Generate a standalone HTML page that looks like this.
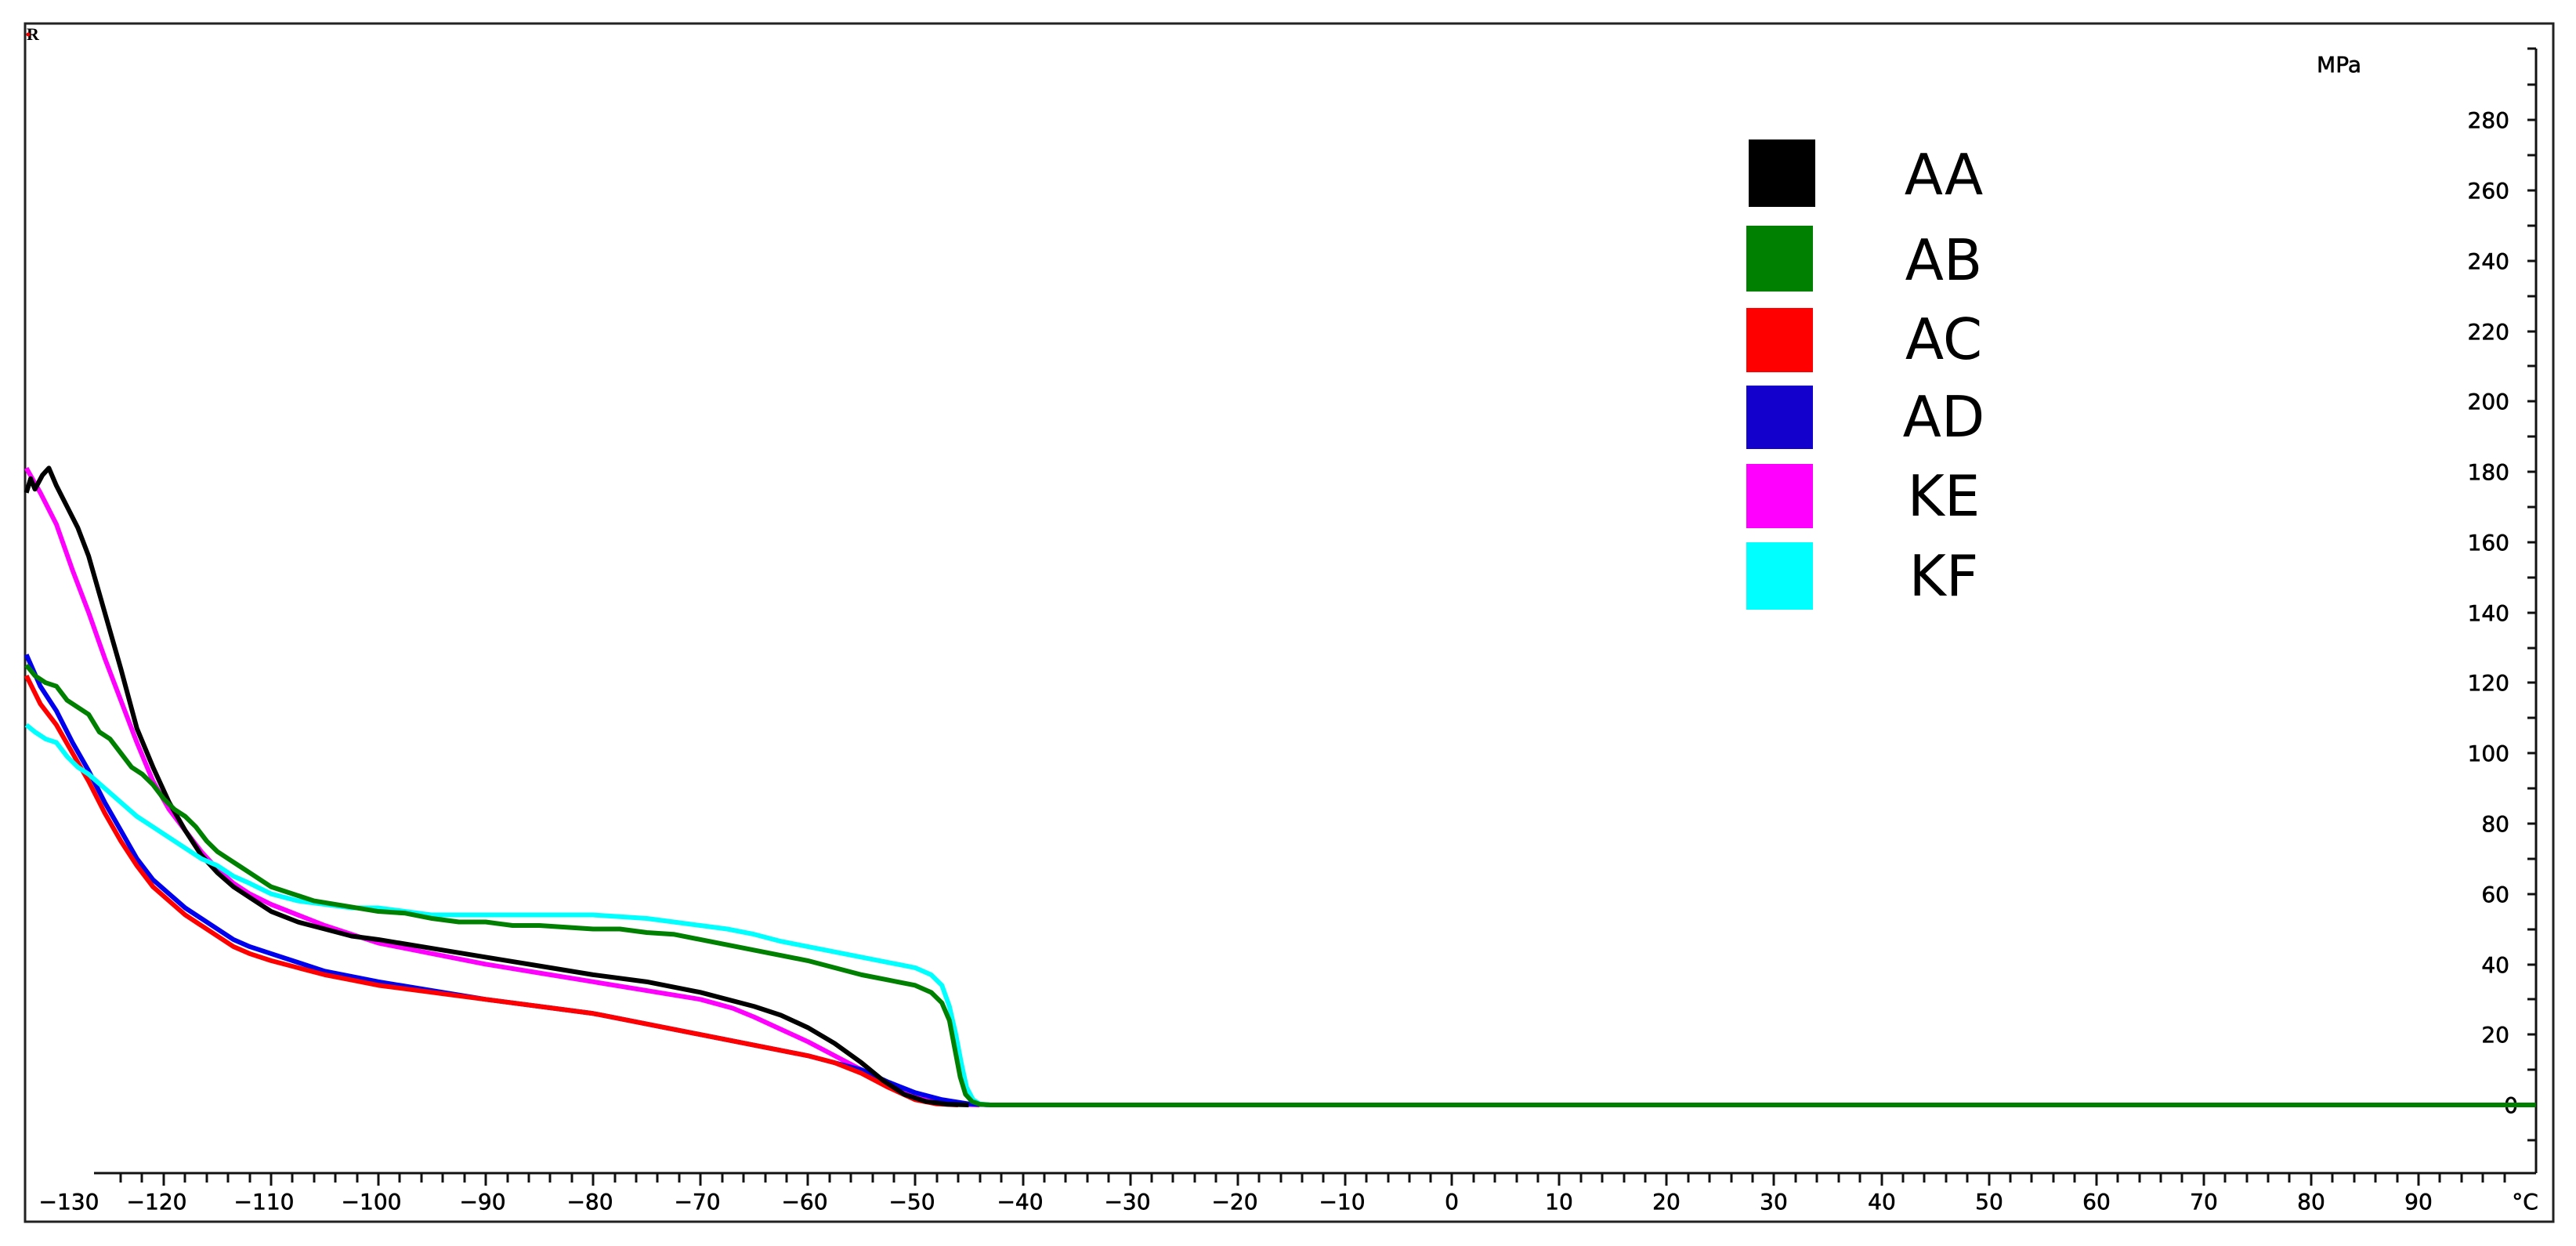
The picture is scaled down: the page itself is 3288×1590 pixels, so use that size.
<!DOCTYPE html>
<html><head><meta charset="utf-8"><style>
html,body{margin:0;padding:0;background:#fff;}
svg{display:block;}
text{font-family:"DejaVu Sans","Liberation Sans",sans-serif;fill:#000;}
.ax text{stroke:#000;stroke-width:0.6;}
</style></head><body>
<svg width="3288" height="1590" viewBox="0 0 3288 1590" xmlns="http://www.w3.org/2000/svg">
<rect x="0" y="0" width="3288" height="1590" fill="#fff"/>
<rect x="32" y="30" width="3227" height="1529" fill="none" stroke="#222" stroke-width="3"/>
<text x="34" y="51" font-size="22" font-weight="bold" style="font-family:'Liberation Serif',serif">R</text>
<circle cx="36" cy="44" r="2.5" fill="#e00"/>

<g stroke="#111" stroke-width="3" fill="none">
<line x1="3237" y1="62" x2="3237" y2="1497"/>
<line x1="3226" y1="62" x2="3237" y2="62"/>
<path d="M3226 108H3237M3226 153H3237M3226 198H3237M3226 243H3237M3226 288H3237M3226 333H3237M3226 378H3237M3226 423H3237M3226 467H3237M3226 512H3237M3226 557H3237M3226 602H3237M3226 647H3237M3226 692H3237M3226 737H3237M3226 782H3237M3226 827H3237M3226 871H3237M3226 916H3237M3226 961H3237M3226 1006H3237M3226 1051H3237M3226 1096H3237M3226 1141H3237M3226 1186H3237M3226 1231H3237M3226 1275H3237M3226 1320H3237M3226 1365H3237M3226 1410H3237M3226 1455H3237"/>
</g>
<g class="ax" font-size="28" text-anchor="end">
<text x="3014" y="92">MPa</text>
<text x="3203" y="163">280</text>
<text x="3203" y="253">260</text>
<text x="3203" y="343">240</text>
<text x="3203" y="433">220</text>
<text x="3203" y="522">200</text>
<text x="3203" y="612">180</text>
<text x="3203" y="702">160</text>
<text x="3203" y="792">140</text>
<text x="3203" y="881">120</text>
<text x="3203" y="971">100</text>
<text x="3203" y="1061">80</text>
<text x="3203" y="1151">60</text>
<text x="3203" y="1241">40</text>
<text x="3203" y="1330">20</text>
<text x="3214" y="1420">0</text>
</g>

<line x1="120" y1="1497" x2="3237" y2="1497" stroke="#111" stroke-width="3"/>
<path stroke="#111" stroke-width="3" fill="none" d="
M154 1497V1509M181 1497V1509M209 1497V1509M236 1497V1509M264 1497V1509M291 1497V1509M319 1497V1509M346 1497V1509M373 1497V1509M401 1497V1509M428 1497V1509M456 1497V1509M483 1497V1509M510 1497V1509M538 1497V1509M565 1497V1509M593 1497V1509M620 1497V1509M648 1497V1509M675 1497V1509M702 1497V1509M730 1497V1509M757 1497V1509M785 1497V1509M812 1497V1509M839 1497V1509M867 1497V1509M894 1497V1509M922 1497V1509M949 1497V1509M977 1497V1509M1004 1497V1509M1031 1497V1509M1059 1497V1509M1086 1497V1509M1114 1497V1509M1141 1497V1509M1168 1497V1509M1196 1497V1509M1223 1497V1509M1251 1497V1509M1278 1497V1509M1306 1497V1509M1333 1497V1509M1360 1497V1509M1388 1497V1509M1415 1497V1509M1443 1497V1509M1470 1497V1509M1497 1497V1509M1525 1497V1509M1552 1497V1509M1580 1497V1509M1607 1497V1509M1635 1497V1509M1662 1497V1509M1689 1497V1509M1717 1497V1509M1744 1497V1509M1772 1497V1509M1799 1497V1509M1826 1497V1509M1853 1497V1509M1881 1497V1509M1908 1497V1509M1936 1497V1509M1963 1497V1509M1990 1497V1509M2018 1497V1509M2045 1497V1509M2073 1497V1509M2100 1497V1509M2127 1497V1509M2155 1497V1509M2182 1497V1509M2210 1497V1509M2237 1497V1509M2264 1497V1509M2292 1497V1509M2319 1497V1509M2347 1497V1509M2374 1497V1509M2402 1497V1509M2429 1497V1509M2456 1497V1509M2484 1497V1509M2511 1497V1509M2539 1497V1509M2566 1497V1509M2593 1497V1509M2621 1497V1509M2648 1497V1509M2676 1497V1509M2703 1497V1509M2731 1497V1509M2758 1497V1509M2785 1497V1509M2813 1497V1509M2840 1497V1509M2868 1497V1509M2895 1497V1509M2922 1497V1509M2950 1497V1509M2977 1497V1509M3005 1497V1509M3032 1497V1509M3060 1497V1509M3087 1497V1509M3114 1497V1509M3142 1497V1509M3169 1497V1509M3197 1497V1509
M209 1497V1513M346 1497V1513M483 1497V1513M620 1497V1513M757 1497V1513M894 1497V1513M1031 1497V1513M1168 1497V1513M1306 1497V1513M1443 1497V1513M1580 1497V1513M1717 1497V1513M1853 1497V1513M1990 1497V1513M2127 1497V1513M2264 1497V1513M2402 1497V1513M2539 1497V1513M2676 1497V1513M2813 1497V1513M2950 1497V1513M3087 1497V1513"/>
<g class="ax" font-size="28" text-anchor="middle">
<text x="88" y="1543">−130</text>
<text x="200" y="1543">−120</text>
<text x="337" y="1543">−110</text>
<text x="474" y="1543">−100</text>
<text x="616" y="1543">−90</text>
<text x="753" y="1543">−80</text>
<text x="890" y="1543">−70</text>
<text x="1027" y="1543">−60</text>
<text x="1164" y="1543">−50</text>
<text x="1302" y="1543">−40</text>
<text x="1439" y="1543">−30</text>
<text x="1576" y="1543">−20</text>
<text x="1713" y="1543">−10</text>
<text x="1853" y="1543">0</text>
<text x="1990" y="1543">10</text>
<text x="2127" y="1543">20</text>
<text x="2264" y="1543">30</text>
<text x="2402" y="1543">40</text>
<text x="2539" y="1543">50</text>
<text x="2676" y="1543">60</text>
<text x="2813" y="1543">70</text>
<text x="2950" y="1543">80</text>
<text x="3087" y="1543">90</text>
<text x="3223" y="1543">°C</text>
</g>

<g transform="translate(1853,1410) scale(13.7,-4.49)" fill="none" stroke-width="6" stroke-linejoin="round">
<polyline vector-effect="non-scaling-stroke" stroke="#ff00ff" points="-132.8,181 -131.5,174 -130,165 -128.5,152 -127,140 -125.5,127 -124,115 -122.5,103 -121,92 -119.5,84 -118,78 -116.5,72 -115,67 -113.5,63 -112,60 -110,57 -107.5,54 -105,51 -102.5,48.5 -100,46 -95,43 -90,40 -85,37.5 -80,35 -75,32.5 -70,30 -67,27.5 -65,25 -62.5,21.5 -60,18 -57.5,14 -55,10 -52.5,6 -50,3 -48,1 -46,0.2 -44,0"/>
<polyline vector-effect="non-scaling-stroke" stroke="#0000ee" points="-132.8,128 -131.5,119 -130,112 -128.5,103 -127,95 -125.5,86 -124,78 -122.5,70 -121,64 -119.5,60 -118,56 -116.5,53 -115,50 -113.5,47 -112,45 -110,43 -107.5,40.5 -105,38 -102.5,36.5 -100,35 -95,32.5 -90,30 -85,28 -80,26 -75,23 -70,20 -65,17 -60,14 -57.5,12 -55,10 -52.5,6.5 -50,3.5 -47.5,1.5 -45,0.3 -43,0"/>
<polyline vector-effect="non-scaling-stroke" stroke="#ff0000" points="-132.8,122 -131.5,114 -130,108 -128.5,100 -127,92 -125.5,83 -124,75 -122.5,68 -121,62 -119.5,58 -118,54 -116.5,51 -115,48 -113.5,45 -112,43 -110,41 -107.5,39 -105,37 -102.5,35.5 -100,34 -95,32 -90,30 -85,28 -80,26 -75,23 -70,20 -65,17 -60,14 -57.5,12 -55,9 -52.5,5 -50,1.5 -48,0.3 -46,0"/>
<polyline vector-effect="non-scaling-stroke" stroke="#000000" points="-132.8,174 -132.4,178 -132,175 -131.3,179 -130.7,181 -130,176 -129,170 -128,164 -127,156 -125.5,140 -124,124 -122.5,107 -121,96 -119.5,86 -118,78 -116.5,71 -115,66 -113.5,62 -112,59 -110,55 -107.5,52 -105,50 -102.5,48 -100,47 -95,44.5 -90,42 -85,39.5 -80,37 -75,35 -70,32 -67.5,30 -65,28 -62.5,25.5 -60,22 -57.5,17.5 -55,12 -53,7 -51,3 -49,1 -47,0.2 -45,0"/>
<polyline vector-effect="non-scaling-stroke" stroke="#00ffff" points="-132.8,108 -132,106 -131,104 -130,103 -129,99 -128,96 -127,94 -125.5,90 -124,86 -122.5,82 -121,79 -119.5,76 -118,73 -116.5,70 -115,68 -113.5,65 -112,63 -110,60 -107.5,58 -105,57 -102.5,56 -100,56 -97.5,55 -95,54 -90,54 -85,54 -80,54 -77.5,53.5 -75,53 -72.5,52 -70,51 -67.5,50 -65,48.5 -62.5,46.5 -60,45 -57.5,43.5 -55,42 -52.5,40.5 -50,39 -48.5,37 -47.5,34 -46.8,28 -46.2,20 -45.7,12 -45.2,5 -44.6,1.5 -44,0.3 -43,0"/>
<polyline vector-effect="non-scaling-stroke" stroke="#008000" points="-132.8,125 -132,122 -131,120 -130,119 -129,115 -128,113 -127,111 -126,106 -125,104 -124,100 -123,96 -122,94 -121,91 -120,87 -119,84 -118,82 -117,79 -116,75 -115,72 -114,70 -113,68 -112,66 -111,64 -110,62 -108,60 -106,58 -104,57 -102,56 -100,55 -97.5,54.5 -95,53 -92.5,52 -90,52 -87.5,51 -85,51 -82.5,50.5 -80,50 -77.5,50 -75,49 -72.5,48.5 -70,47 -67.5,45.5 -65,44 -62.5,42.5 -60,41 -57.5,39 -55,37 -52.5,35.5 -50,34 -48.5,32 -47.5,29 -46.8,24 -46.3,16 -45.8,8 -45.3,3 -44.7,1 -44,0.2 -43,0 101,0"/>
</g>

<rect x="2232" y="178" width="85" height="86" fill="#000"/>
<rect x="2229" y="288" width="85" height="84" fill="#008000"/>
<rect x="2229" y="393" width="85" height="82" fill="#ff0000"/>
<rect x="2229" y="492" width="85" height="81" fill="#1400cc"/>
<rect x="2229" y="592" width="85" height="82" fill="#ff00ff"/>
<rect x="2229" y="692" width="85" height="86" fill="#00ffff"/>
<g font-size="72" text-anchor="middle">
<text x="2481" y="248">AA</text>
<text x="2481" y="357">AB</text>
<text x="2481" y="458">AC</text>
<text x="2481" y="557">AD</text>
<text x="2481" y="658">KE</text>
<text x="2481" y="760">KF</text>
</g>
</svg>
</body></html>
